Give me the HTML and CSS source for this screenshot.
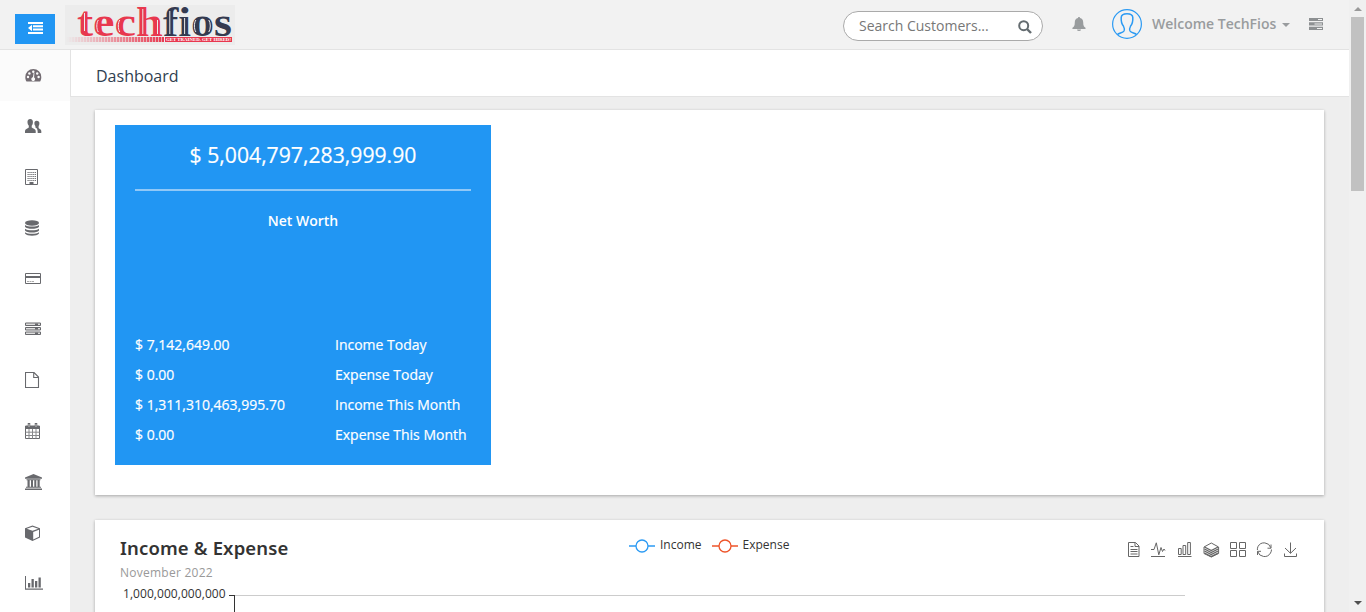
FILE: index.html
```
<!DOCTYPE html>
<html lang="en">
<head>
<meta charset="utf-8">
<title>Dashboard</title>
<link rel="stylesheet" href="styles.css">
</head>
<body>
<div class="app">
  <div class="page">
    <header class="topbar">
      <button class="menu-toggle" aria-label="Toggle menu">
        <svg width="15" height="12" viewBox="0 0 15 12" fill="#fff"><path d="M0 0h15v2H0zM5 3.3h10v2H5zM5 6.6h10v2H5zM0 10h15v2H0zM0 6l4-3.2v6.4z"/></svg>
      </button>
      <svg class="logo" width="170" height="40" viewBox="0 0 170 40">
        <defs>
          <linearGradient id="fade"><stop offset="0" stop-color="#e8384f" stop-opacity="0"/><stop offset="1" stop-color="#e8384f"/></linearGradient>
          <pattern id="bars" width="3" height="6" patternUnits="userSpaceOnUse"><path d="M0 0h1v6H0z" fill="#ebebeb" fill-opacity=".6"/></pattern>
        </defs>
        <text class="logo-word" x="12" y="31" fill="#e8384f" textLength="86" lengthAdjust="spacingAndGlyphs">tech</text>
        <text class="logo-word logo-dark" x="98" y="31" textLength="69" lengthAdjust="spacingAndGlyphs">fios</text>
        <g fill="none" stroke="#ececec" stroke-width="1">
          <path d="M77.800 4v25M92.500 15v14M19.500 8v18M33.300 15c-2 3-2 9 0 12M54.800 15c-2 3-2 9 0 12"/>
          <path d="M104.800 6v23M119.600 13v16M130.900 15c-2 3-2 9 0 12M143.800 15c2 3 2 9 0 12"/>
        </g>
        <path d="M1 32h98v5H1z" fill="url(#fade)"/><path d="M1 32h98v5H1z" fill="url(#bars)"/>
        <path d="M100 32h67v5h-67z" fill="#e8384f"/>
        <text class="logo-tag" x="101" y="36.300" textLength="65" lengthAdjust="spacingAndGlyphs">GET TRAINED. GET HIRED!</text>
      </svg>
      <div class="search"><span>Search Customers...</span>
        <svg width="14" height="14" viewBox="0 0 14 14" fill="none" stroke="#646c70" stroke-width="2"><circle cx="5.7" cy="5.7" r="4.5"/><path d="M9 9l4 4" stroke-width="2.4"/></svg>
      </div>
      <svg class="bell" width="14" height="14" viewBox="0 0 14 14" fill="#999c9e"><path d="M7 0c.7 0 1 .4 1 1 2.2.5 3.2 2.2 3.2 4.2 0 3.3.8 4.600 2.300 5.600.5.500.2 1.200-.5 1.200H1c-.7 0-1-.7-.5-1.200C2 9.800 2.800 8.500 2.800 5.200 2.800 3.200 3.800 1.500 6 1c0-.6.300-1 1-1zM5 12.500h4a2 1.500 0 0 1-4 0z"/></svg>
      <svg class="avatar" width="30" height="30" viewBox="0 0 30 30" fill="none" stroke="#2b9af3"><circle cx="15" cy="15" r="14.400" stroke-width="1.200"/><path stroke-width="1.500" d="M5.500 25.500c1.500-1.500 5.500-1.700 6.500-3.500.7-1.500.2-3.500-.6-5C9.700 15 9 12 9.200 8.500 9.300 5.800 11.500 4.700 15 4.700s5.700 1.100 5.800 3.800c.2 3.500-.5 6.500-2.200 8.500-.8 1.500-1.300 3.500-.6 5 1 1.800 5 2 6.500 3.500"/></svg>
      <span class="welcome">Welcome TechFios</span>
      <span class="caret"></span>
      <svg class="tasks" width="14" height="12" viewBox="0 0 14 12"><path fill="#8d9092" d="M0 0h14v3H0zM0 4.200h14v3.300H0zM0 8.700h14v3.300H0z"/><path fill="#f2f2f2" d="M9 1h4v1H9zM5.500 5.400h7.500v1H5.500zM8 9.900h5v1H8z"/></svg>
    </header>
    <div class="body">
      <nav class="side">
        <a class="item active"><svg width="17" height="16" viewBox="0 0 17 16"><path fill="#736c72" d="M8.300 2A8 8 0 0 0 .3 10c0 1.500.3 3 1.200 4.500h13.600c.9-1.500 1.200-3 1.200-4.500a8 8 0 0 0-8-8z"/><g fill="#fbfbfb"><circle cx="3" cy="10" r="1.200"/><circle cx="4.400" cy="6.500" r="1.200"/><circle cx="8.300" cy="4.700" r="1.200"/><circle cx="12.200" cy="6.500" r="1.200"/><circle cx="13.600" cy="10" r="1.200"/><path d="M9.400 6l-.3 4.400a1.900 1.900 0 1 1-1.200-.2L8.700 6z"/></g></svg></a>
        <a class="item"><svg width="17" height="16" viewBox="0 0 17 16" fill="#68696d"><path d="M5.200 1C3.300 1 2.300 2.500 2.500 4.500c.1 1.500.7 2.500 1.300 3.200v1.800C2.500 10.500 0 11 0 13v2h10.700v-2c0-2-2.700-2.500-4-3.500V7.700C7.400 7 7.800 6 7.900 4.500 8.100 2.500 7.100 1 5.200 1zM11.600 2.700c-1.500 0-2.300 1-2.200 2.700 0 1.200.5 2 1 2.600v1.500c2 .9 2.300 2.500 2.300 5.500H16.300v-2c0-1.500-1.800-2-2.700-3V8c.5-.6.800-1.400.8-2.600.1-1.700-.9-2.700-2.800-2.700z"/></svg></a>
        <a class="item"><svg width="17" height="16" viewBox="0 0 17 16" fill="none" stroke="#68696d"><path d="M.5.500h12v15H.5z"/><path d="M2.500 3.500h8.500M2.500 5.500h8.500M2.500 7.500h8.500M2.500 9.500h8.500M2.500 11.500h8.500" stroke-dasharray="1.200 .7"/><path d="M4.500 14h4" stroke-width="2"/></svg></a>
        <a class="item"><svg width="17" height="16" viewBox="0 0 17 16" fill="#68696d"><ellipse cx="7" cy="3" rx="7" ry="2.700"/><path d="M0 5.100c2.500 2 11.500 2 14 0v1.700c-2 2.700-12 2.700-14 0zM0 8.700c2.500 2 11.500 2 14 0v1.700c-2 2.700-12 2.700-14 0zM0 12.300c2.500 2 11.500 2 14 0v1.200c-2 3-12 3-14 0z"/></svg></a>
        <a class="item"><svg width="17" height="16" viewBox="0 0 17 16" fill="none" stroke="#68696d"><path d="M.5 2.500h15v10H.5z"/><path d="M0 6h16" stroke-width="2"/><path d="M2 10.500h7" stroke="#aaa" stroke-dasharray="2 .5"/></svg></a>
        <a class="item"><svg width="17" height="16" viewBox="0 0 17 16" fill="#ddd" stroke="#68696d"><path d="M.5 2h15v2.500H.5zM.5 6.500h15V9H.5zM.5 11h15v2.500H.5z"/><path d="M10 3.200h3M10 7.700h3M10 12.200h3" stroke-width="1.600"/></svg></a>
        <a class="item"><svg width="17" height="16" viewBox="0 0 17 16" fill="none" stroke="#68696d" stroke-width="1.100"><path d="M.5.500h8.500L13.500 5v10.500H.5zM8.700.5v5h5"/></svg></a>
        <a class="item"><svg width="17" height="16" viewBox="0 0 17 16" fill="none" stroke="#68696d"><path d="M.5 3h14v12.500H.5z"/><path d="M0 4.500h15" stroke-width="3"/><path d="M4 6v9.500M7.500 6v9.500M11 6v9.500M.5 9.200h14M.5 12.500h14" stroke="#88898c"/><path d="M4 0v4M11 0v4" stroke-width="2.500"/><path d="M4 1v3M11 1v3" stroke="#ddd" stroke-width=".8"/></svg></a>
        <a class="item"><svg width="17" height="16" viewBox="0 0 17 16" fill="#68696d"><path d="M8.500 0L17 3.500v1.200H0V3.500zM1.500 5.200h14v1h-14zM2.500 6h2.200v7H2.500zM6 6h2v7H6zM9.300 6h2v7h-2zM12.500 6h2.200v7h-2.200zM1 12.800h15v1H1zM0 14.400h17V16H0z"/></svg></a>
        <a class="item"><svg width="17" height="16" viewBox="0 0 17 16"><path fill="#68696d" d="M7.500 .5L15 3.200v9.200L7.500 16 0 12.500V3.200z"/><path fill="#fff" d="M7.500 1.700l5.700 2-5.700 2-5.700-2zM8.200 7L14 4.800v7l-5.800 2.800z"/></svg></a>
        <a class="item"><svg width="19" height="16" viewBox="0 0 19 16" fill="#68696d"><path d="M0 1h1v12.500h17v1.200H0zM3 8h2.300v4.500H3zM6.500 4h2.300v8.500H6.500zM10 6h2.300v6.500H10zM13.500 2.500h2.300v10h-2.300z"/></svg></a>
      </nav>
      <main class="main">
        <h1 class="title">Dashboard</h1>
        <section class="panel worth-panel">
          <div class="worth">
            <div class="amount"><span>$ 5,004,797,283,999.90</span></div>
            <div class="label">Net Worth</div>
            <dl class="stats">
              <dt>$ 7,142,649.00</dt><dd>Income Today</dd>
              <dt>$ 0.00</dt><dd>Expense Today</dd>
              <dt>$ 1,311,310,463,995.70</dt><dd>Income This Month</dd>
              <dt>$ 0.00</dt><dd>Expense This Month</dd>
            </dl>
          </div>
        </section>
        <section class="panel chart-panel">
          <div class="chart-head">
            <div class="chart-title"><h2>Income &amp; Expense</h2><p>November 2022</p></div>
            <div class="legend">
              <svg width="26" height="14" viewBox="0 0 26 14" fill="#fff" stroke="#2b9af3" stroke-width="1.300"><path d="M0 7h26" stroke-width="1.500"/><circle cx="13" cy="7" r="6"/></svg><span>Income</span>
              <svg class="second" width="26" height="14" viewBox="0 0 26 14" fill="#fff" stroke="#ee5328" stroke-width="1.300"><path d="M0 7h26" stroke-width="1.500"/><circle cx="13" cy="7" r="6"/></svg><span>Expense</span>
            </div>
            <svg class="tools" width="172" height="16" viewBox="0 0 172 16" fill="none" stroke="#666">
              <path d="M1.500.5h7L12 4v10.500H1.500zM8 .5V4.500h4M3.500 4.500h3M3.500 7.500h7M3.500 9.500h7M3.500 12h7"/>
              <path d="M24 7.500h3L29.300.8l2.500 12L34 5.500l1.500 4 1.500-2.500 1 1.500M24 14.500h14" />
              <path d="M51.500 6.500h2.700v6h-2.700zM56 3.500h2.700v9H56zM60.700.5h2.700v12h-2.700zM51 14.500h13.500"/>
              <path fill="#fff" d="M77 11.500l7.300 3.500 7.300-3.500V5L84.300 1 77 5z"/><path d="M77.500 5l6.800 3.500L91.100 5M77.500 7l6.800 3.500L91.100 7M77.500 9l6.800 3.500L91.100 9M77.500 11l6.800 3.500 6.800-3.500" stroke-width="1.400"/>
              <path d="M103.500.5h6v6h-6zM112.500.5h6v6h-6zM103.500 8.500h6v6h-6zM112.500 8.500h6v6h-6z"/>
              <path d="M131 4.500a7 7 0 0 1 12.800 1.200M144 2.500v3.700h-3.500M143.500 11a7 7 0 0 1-12.800-1.500M130.500 13V9.300h3.500M130.400 8a7 7 0 0 1 .6-3.500M144.500 7.500a7 7 0 0 1-1 3.500"/>
              <path d="M163.500.5v10.700M158 6l5.500 5.300L169 6M157.500 11.500v3h12v-3"/>
            </svg>
          </div>
          <div class="plot"><span class="tick">1,000,000,000,000</span><svg width="956" height="20" viewBox="0 0 956 20" fill="none"><path d="M6 1.500h950" stroke="#ccc"/><path d="M0 1.500h5.500M5.500 1v19" stroke="#333"/></svg></div>
        </section>
      </main>
    </div>
  </div>
  <div class="scrollbar"><i class="up"></i><i class="thumb"></i><i class="down"></i></div>
</div>
</body>
</html>
```
FILE: styles.css
```
* { box-sizing: border-box; }
body { margin: 0; overflow: hidden; font-family: "Open Sans", "Noto Sans", sans-serif; background: #eee; }
svg { display: block; flex: none; }
h1, h2, p, dl, dd { margin: 0; }
.app { display: flex; width: 1366px; height: 612px; overflow: hidden; }
.page { width: 1349px; height: 612px; }
.topbar { height: 50px; background: #f2f2f2; border-bottom: 1px solid #e3e3e3; display: flex; align-items: flex-start; padding-left: 15px; }
.menu-toggle { width: 40px; height: 30px; margin-top: 14px; border: 0; padding: 0 0 2px; background: #2196f3; display: flex; align-items: center; justify-content: center; }
.logo { margin: 5px 0 0 10px; background: #ececec; overflow: visible; }
.logo-word { font: bold 42px "Liberation Serif", serif; }
.logo-dark { fill: #343a50; }
.logo-tag { font: bold 5px "Liberation Serif", serif; fill: #fff; }
.search { width: 200px; height: 30px; margin: 11px 0 0 608px; border: 1px solid #aaa; border-radius: 15px; background: #fff; display: flex; align-items: center; justify-content: space-between; padding: 0 11px 0 15px; font-size: 14px; color: #777; white-space: nowrap; }
.search span { margin-top: -2px; }
.search svg { margin: 1px -1px 0 0; }
.bell { margin: 17px 0 0 29px; }
.avatar { margin: 9px 0 0 26px; }
.welcome { margin: 14px 0 0 10px; width: 125px; font-size: 14px; line-height: 19px; font-weight: 600; color: #999c9e; white-space: nowrap; }
.caret { margin: 23px 0 0 5px; border: 4px solid transparent; border-top-color: #999c9e; border-bottom: 0; }
.tasks { margin: 18px 0 0 19px; }
.body { display: flex; height: 562px; }
.side { width: 70px; background: #fff; overflow: hidden; }
.item { display: flex; align-items: center; height: 50.800px; padding-left: 25px; }
.active { background: #fbfbfb; }
.main { width: 1279px; background: #eee; overflow: hidden; }
.title { height: 47px; background: #fff; border-left: 1px solid #e3e3e3; border-bottom: 1px solid #e3e3e3; padding-left: 25px; font-size: 16px; line-height: 52px; font-weight: 400; color: #2f4050; }
.panel { margin-left: 25px; width: 1229px; background: #fff; box-shadow: 0 1px 3px rgba(0,0,0,.3); }
.worth-panel { margin-top: 13px; height: 385px; padding: 15px 20px; }
.worth { width: 376px; height: 340px; background: #2196f3; color: #fff; padding: 0 20px; }
.amount { height: 66px; border-bottom: 2px solid #90c8f7; text-align: center; font-size: 21.200px; line-height: 59px; -webkit-text-stroke: .2px #fff; }
.label { text-align: center; font-size: 14px; font-weight: 600; line-height: 20px; margin-top: 20px; }
.stats { display: grid; grid-template-columns: 200px 1fr; grid-auto-rows: 30.200px; margin-top: 98.600px; font-size: 14px; line-height: 30px; white-space: nowrap; -webkit-text-stroke: .2px #fff; }
.chart-panel { margin-top: 25px; height: 120px; }
.chart-head { display: flex; height: 66px; padding-left: 25px; }
.chart-title { width: 509px; }
.chart-title h2 { margin-top: 15px; font: 600 18.500px/25px "Noto Sans", sans-serif; letter-spacing: .150px; color: #333; }
.chart-title p { margin-top: 4px; font-size: 12px; line-height: 18px; letter-spacing: .25px; color: #999; }
.legend { display: flex; height: 14px; align-items: center; margin-top: 19px; width: 498px; font-size: 12px; color: #333; }
.legend span { margin: -3px 0 0 5px; }
.legend .second { margin-left: 10px; }
.tools { margin-top: 22px; }
.plot { display: flex; padding-left: 28px; height: 20px; margin-top: 8px; }
.tick { width: 106px; font-size: 12px; line-height: 16px; margin-top: -8px; letter-spacing: .06px; color: #333; white-space: nowrap; }
.scrollbar { width: 17px; height: 612px; background: #f0f0f0; display: flex; flex-direction: column; align-items: center; }
.up { margin-top: 7px; border: 4px solid transparent; border-bottom-color: #999; border-top: 0; }
.thumb { width: 13px; height: 174px; margin-top: 6px; margin-left: -1px; background: #c1c1c1; }
.down { margin-top: 410px; border: 4px solid transparent; border-top-color: #505050; border-bottom: 0; }
```
